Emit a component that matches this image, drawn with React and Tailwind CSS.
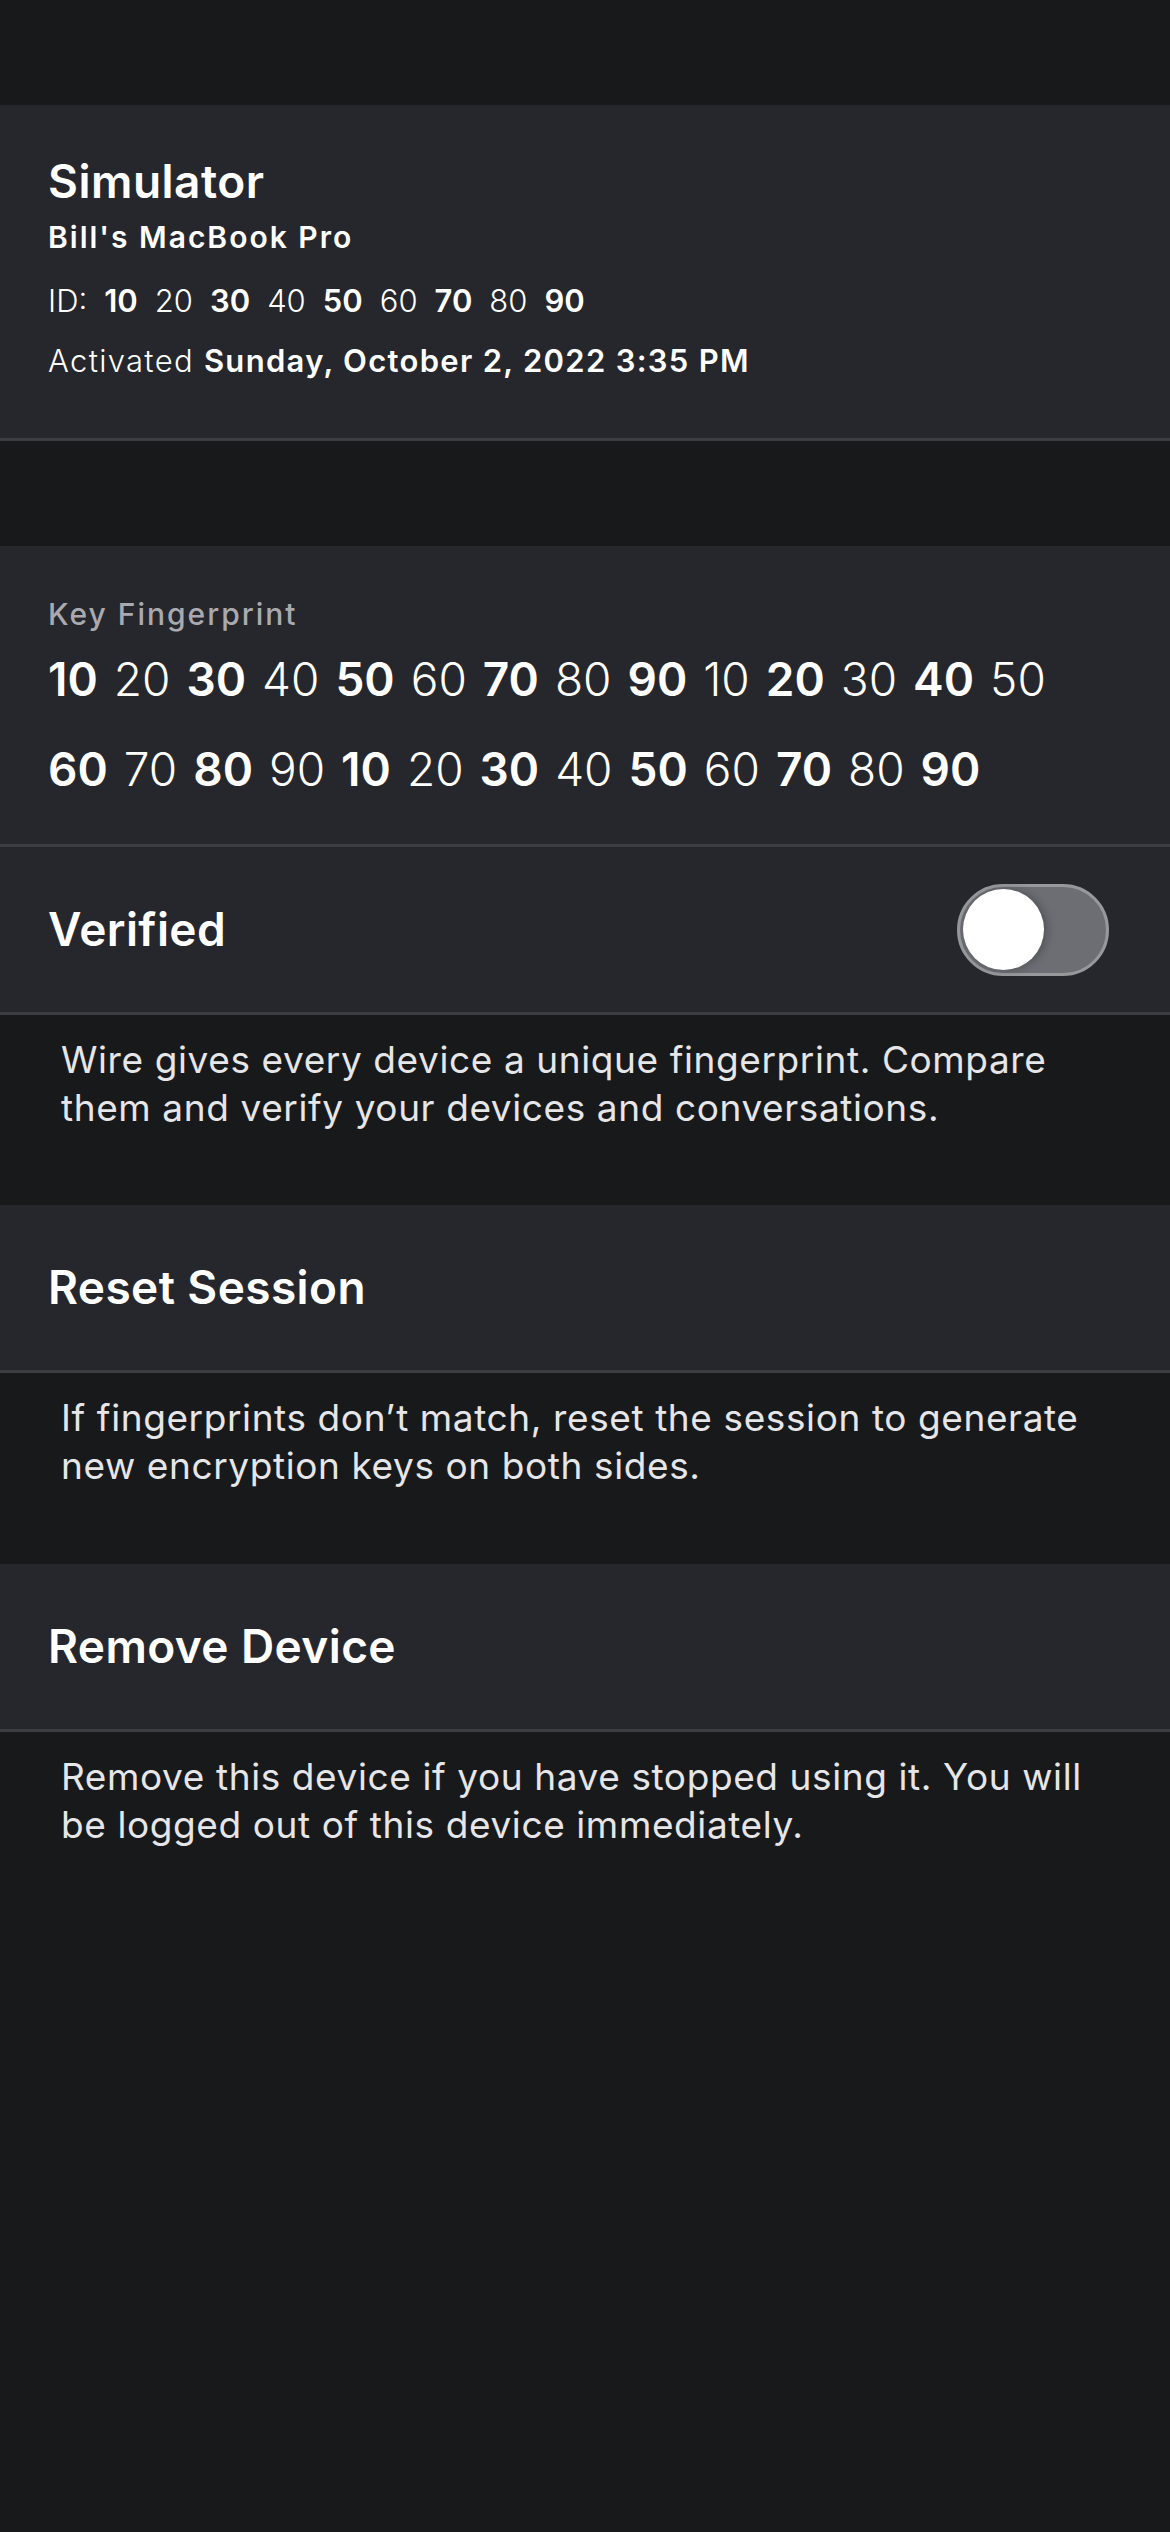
import React from 'react';

const idNumbers = ['10', '20', '30', '40', '50', '60', '70', '80', '90'];
const fingerprint = [
  ['10', '20', '30', '40', '50', '60', '70', '80', '90', '10', '20', '30', '40', '50'],
  ['60', '70', '80', '90', '10', '20', '30', '40', '50', '60', '70', '80', '90'],
];

const Toggle = () => (
  <div className="w-[152px] h-[92px] rounded-full bg-[#6c6e74] border-[3px] border-[#97989c] flex items-center px-[3px]">
    <div className="w-[81px] h-[81px] rounded-full bg-white shadow-[3px_0_8px_rgba(0,0,0,0.25)]" />
  </div>
);

const ActionRow = ({ title, children }) => (
  <div className="h-[168px] bg-[#26272c] border-b-[3px] border-[#3c3d42] flex items-center justify-between pl-[48px] pr-[61px]">
    <span className="text-[46px] font-semibold tracking-[0.4px] text-white">{title}</span>
    {children}
  </div>
);

const Footnote = ({ children, className = '' }) => (
  <p className={`px-[61px] pt-[21px] text-[37px] leading-[48px] tracking-[0.6px] text-[#e6e6e9] ${className}`}>
    {children}
  </p>
);

const App = () => {
  let n = 0;
  return (
    <div
      className="min-h-[2532px] w-full bg-[#18191b] text-white"
      style={{ fontFamily: 'Inter, "Noto Sans", sans-serif' }}
    >
      <div className="h-[105px]" />

      {/* Device info */}
      <section className="bg-[#26272c] border-b-[3px] border-[#3c3d42] px-[48px] pt-[48px] pb-[47px]">
        <h1 className="text-[46px] leading-[56px] font-semibold tracking-[0.5px]">Simulator</h1>
        <p className="mt-[8px] text-[30px] leading-[40px] font-semibold tracking-[2px]">Bill's MacBook Pro</p>
        <div className="mt-[14px] text-[31px] leading-[60px] flex gap-x-[17px]">
          <span className="font-light">ID:</span>
          {idNumbers.map((v, i) => (
            <span key={i} className={i % 2 === 0 ? 'font-semibold' : 'font-light'}>{v}</span>
          ))}
        </div>
        <p className="text-[31px] leading-[60px] tracking-[1.3px]">
          <span className="font-light">Activated </span>
          <span className="font-semibold">Sunday, October 2, 2022 3:35 PM</span>
        </p>
      </section>

      <div className="h-[105px]" />

      {/* Key fingerprint */}
      <section className="bg-[#26272c] border-b-[3px] border-[#3c3d42] px-[48px] pt-[48px] pb-[30px]">
        <p className="text-[30px] leading-[40px] font-medium tracking-[2px] text-[#a9aab0]">Key Fingerprint</p>
        {fingerprint.map((line, li) => (
          <div key={li} className="flex gap-x-[16px] text-[46px] leading-[90px]">
            {line.map((v, i) => {
              const bold = n++ % 2 === 0;
              return (
                <span key={i} className={bold ? 'font-semibold' : 'font-light'}>{v}</span>
              );
            })}
          </div>
        ))}
      </section>

      <ActionRow title="Verified">
        <Toggle />
      </ActionRow>
      <Footnote className="h-[190px]">
        Wire gives every device a unique fingerprint. Compare them and verify your devices and conversations.
      </Footnote>

      <ActionRow title="Reset Session" />
      <Footnote className="h-[191px]">
        If fingerprints don’t match, reset the session to generate new encryption keys on both sides.
      </Footnote>

      <ActionRow title="Remove Device" />
      <Footnote>
        Remove this device if you have stopped using it. You will be logged out of this device immediately.
      </Footnote>
    </div>
  );
};

export default App;
